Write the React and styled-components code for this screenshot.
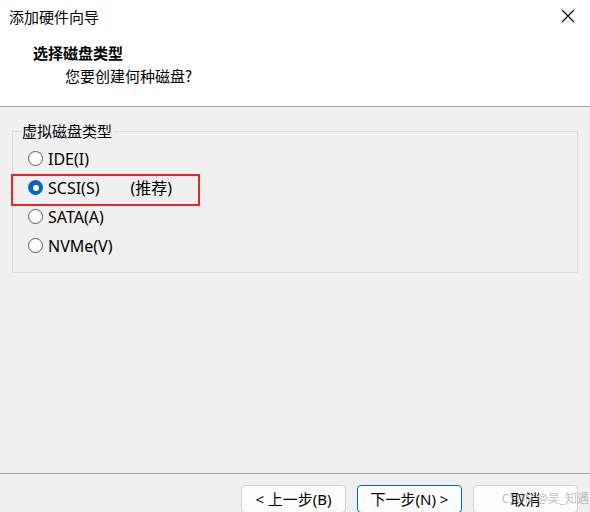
import React from "react";
import styled, { createGlobalStyle } from "styled-components";

const Global = createGlobalStyle`
  html, body { margin: 0; padding: 0; }
  body {
    background: #f0f0f0;
    font-family: "Noto Sans", "Noto Sans CJK SC", sans-serif;
    color: #000;
  }
`;

const Window = styled.div`
  width: 590px;
  height: 512px;
  display: flex;
  flex-direction: column;
  background: #f0f0f0;
  position: relative;
  overflow: hidden;
  font-family: "Noto Sans", "Noto Sans CJK SC", sans-serif;
`;

const Header = styled.div`
  height: 106px;
  background: #fff;
  border-bottom: 1px solid #a0a0a0;
  display: flex;
  flex-direction: column;
`;

const TitleBar = styled.div`
  height: 32px;
  display: flex;
  align-items: center;
  justify-content: space-between;
  padding: 0 12px 0 9px;
  font-size: 15px;
  font-family: "Noto Sans CJK SC", sans-serif;
`;

const Close = styled.div`
  width: 16px;
  height: 16px;
  display: flex;
  align-items: center;
  justify-content: center;
  margin-right: 2px;
`;

const HeadTitle = styled.div`
  margin: 11px 0 0 33px;
  font-size: 15px;
  font-weight: 700;
  line-height: 20px;
  font-family: "Noto Sans CJK SC", sans-serif;
`;

const HeadSub = styled.div`
  margin: 3px 0 0 65px;
  font-size: 15px;
  line-height: 20px;
  font-family: "Noto Sans CJK SC", sans-serif;
`;

const Body = styled.div`
  flex: 1;
  padding: 14px 12px 0 12px;
`;

const Group = styled.fieldset`
  margin: 0;
  padding: 3px 0 12px 0;
  border: 1px solid #dcdcdc;
  min-width: 0;
`;

const Legend = styled.legend`
  margin-left: 8px;
  padding: 0 2px 0 1px;
  font-size: 15px;
  line-height: 20px;
  font-family: "Noto Sans CJK SC", sans-serif;
`;

const Row = styled.label`
  height: 29px;
  display: flex;
  align-items: center;
  padding-left: 15px;
  font-size: 16px;
  position: relative;
  ${(p) =>
    p.$highlight &&
    `
    &::after {
      content: "";
      position: absolute;
      left: -2px;
      top: 1px;
      width: 189px;
      height: 32px;
      box-sizing: border-box;
      border: 2px solid #e3242b;
    }
  `}
`;

const Radio = styled.span`
  width: 15px;
  height: 15px;
  box-sizing: border-box;
  border-radius: 50%;
  border: 1px solid ${(p) => (p.$checked ? "#0067c0" : "#5a5a5a")};
  background: ${(p) => (p.$checked ? "#0067c0" : "#fff")};
  display: flex;
  align-items: center;
  justify-content: center;
  margin-right: 5px;
  flex-shrink: 0;
  &::after {
    content: "";
    display: ${(p) => (p.$checked ? "block" : "none")};
    width: 6px;
    height: 6px;
    border-radius: 50%;
    background: #fff;
  }
`;

const Label = styled.span`
  line-height: 20px;
`;

const Note = styled.span`
  margin-left: 31px;
  line-height: 20px;
`;

const Footer = styled.div`
  border-top: 1px solid #a0a0a0;
  display: flex;
  justify-content: flex-end;
  gap: 11px;
  padding: 11px 12px 0 0;
  box-sizing: border-box;
  height: 39px;
`;

const Button = styled.button`
  width: 105px;
  height: 28px;
  flex-shrink: 0;
  box-sizing: border-box;
  background: #fdfdfd;
  border: 1px solid ${(p) => (p.$primary ? "#0067c0" : "#d0d0d0")};
  border-radius: 4px;
  font-size: 15px;
  font-family: "Noto Sans", "Noto Sans CJK SC", sans-serif;
  color: #000;
  padding: 0 0 2px;
  display: flex;
  align-items: center;
  justify-content: center;
`;

const Watermark = styled.div`
  position: absolute;
  right: 1px;
  bottom: 5px;
  font-size: 12px;
  color: rgba(150, 150, 150, 0.6);
  font-family: "Noto Sans", "Noto Sans CJK SC", sans-serif;
  pointer-events: none;
`;

const options = [
  { label: "IDE(I)" },
  { label: "SCSI(S)", note: "(推荐)", checked: true },
  { label: "SATA(A)" },
  { label: "NVMe(V)" },
];

export default function App() {
  return (
    <>
      <Global />
      <Window>
        <Header>
          <TitleBar>
            <span>添加硬件向导</span>
            <Close>
              <svg width="14" height="14" viewBox="0 0 14 14">
                <path d="M1 1 L13 13 M13 1 L1 13" stroke="#000" strokeWidth="1.1" />
              </svg>
            </Close>
          </TitleBar>
          <HeadTitle>选择磁盘类型</HeadTitle>
          <HeadSub>您要创建何种磁盘?</HeadSub>
        </Header>
        <Body>
          <Group>
            <Legend>虚拟磁盘类型</Legend>
            {options.map((o) => (
              <Row key={o.label} $highlight={o.checked}>
                <Radio $checked={o.checked} />
                <Label>{o.label}</Label>
                {o.note && <Note>{o.note}</Note>}
              </Row>
            ))}
          </Group>
        </Body>
        <Footer>
          <Button>&lt; 上一步(B)</Button>
          <Button $primary>下一步(N) &gt;</Button>
          <Button>取消</Button>
        </Footer>
        <Watermark>CSDN @吴_知遇</Watermark>
      </Window>
    </>
  );
}
